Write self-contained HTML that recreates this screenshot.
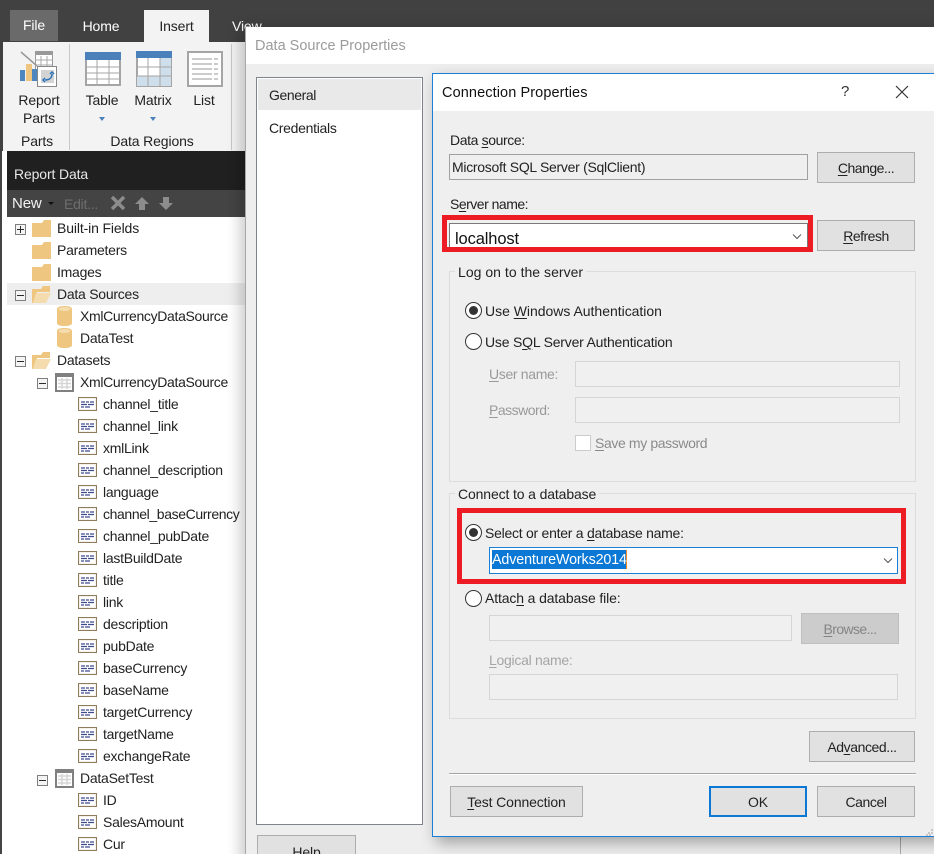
<!DOCTYPE html>
<html><head><meta charset="utf-8"><title>Connection Properties</title>
<style>
html,body{margin:0;padding:0;background:#fff}
#p{position:relative;width:934px;height:854px;overflow:hidden;background:#fff;font-family:"Liberation Sans",sans-serif;font-size:14px;color:#222}
#p div,#p svg,#p span.t{position:absolute;box-sizing:border-box}
.t{white-space:nowrap;line-height:20px;letter-spacing:-.13px}
#tr .t{letter-spacing:-.25px}
.c{text-align:center}
.g{color:#9a9a9a}
u{text-underline-offset:2px}
.btn{background:#e1e1e1;border:1px solid #adadad;line-height:1}
.in{border:1px solid #d5d5d5;background:#f0f0f0}
.box{border:1px solid #dcdcdc}
.lg{background:#efefef;padding:0 3px;margin-left:0;color:#222}
.r{width:17px;height:17px;border:1px solid #333;border-radius:50%;background:#fff}
.r.on::after{content:"";position:absolute;left:3px;top:3px;width:9px;height:9px;border-radius:50%;background:#333}
.red{border:5px solid #ed1c24}
.exp{width:11px;height:11px;border:1px solid #7f7f7f;background:#f4f4f4}
.exp::after{content:"";position:absolute;left:1px;top:4px;width:7px;height:1px;background:#2b2b2b}
.exp.pl::before{content:"";position:absolute;left:4px;top:1px;width:1px;height:7px;background:#2b2b2b}
</style></head><body>
<div id="p">
<svg width="0" height="0" style="left:0;top:0">
<defs>
<symbol id="fc" viewBox="0 0 19 17"><path d="M0 3h10l2-3h7v17H0z" fill="#eec680"/></symbol>
<symbol id="fo" viewBox="0 0 19 17"><path d="M0 3h9l2-3h7v6H5L1 17H0z" fill="#eec680"/><path d="M4 7h15L14 17H1z" fill="#f5dcae"/></symbol>
<symbol id="db" viewBox="0 0 15 20"><path d="M0 3C0 1 3 0 7.500 0S15 1 15 3v14c0 2-3 3-7.500 3S0 19 0 17z" fill="#eec680"/><ellipse cx="7.500" cy="3" rx="6" ry="2" fill="#f5dcae"/></symbol>
<symbol id="tb" viewBox="0 0 19 19"><rect x="1" y="1" width="17" height="17" fill="#fff" stroke="#808080" stroke-width="2"/><rect x="0" y="0" width="19" height="4" fill="#808080"/><path d="M3 7h13M3 10.500h13M3 14h13M7 5v11M12 5v11" stroke="#d5d5d5" fill="none" stroke-width="1.500"/></symbol>
<symbol id="fl" viewBox="0 0 19 14"><rect x=".5" y=".5" width="18" height="13" fill="#f4f1ea" stroke="#8d7d5c"/><rect x="2" y="2" width="15" height="10" fill="#fff"/><path d="M3 5h4M8 5h3M12 5h4M3 7.500h6M10 7.500h6M3 10h3M7 10h5" stroke="#3f4a8f" stroke-width="1.300" fill="none"/></symbol>
<symbol id="ch" viewBox="0 0 10 6"><path d="M1 .500l4 4 4-4" fill="none" stroke="#555" stroke-width="1"/></symbol>
</defs></svg>

<!-- app top bar -->
<div style="left:0;top:0;width:934px;height:42px;background:#414141"></div>
<div style="left:0;top:0;width:3px;height:151px;background:#414141"></div>
<div style="left:0;top:151px;width:2px;height:703px;background:#444"></div>
<div style="left:10px;top:10px;width:48px;height:31px;background:#6a6a6a"></div>
<span class="t c" style="left:10px;top:15px;width:48px;color:#fff">File</span>
<span class="t c" style="left:70px;top:16px;width:62px;color:#fff">Home</span>
<div style="left:144px;top:10px;width:65px;height:32px;background:#f3f3f3"></div>
<span class="t c" style="left:144px;top:16px;width:65px">Insert</span>
<span class="t" style="left:232px;top:16px;color:#fff">View</span>

<!-- ribbon -->
<div style="left:3px;top:42px;width:242px;height:109px;background:#f3f3f3"></div>
<div style="left:69px;top:44px;width:1px;height:106px;background:#c8c8c8"></div>
<div style="left:231px;top:44px;width:1px;height:106px;background:#c8c8c8"></div>
<svg style="left:20px;top:50px" width="38" height="38" viewBox="0 0 38 38">
<rect x="15.500" y="1.500" width="17" height="19" fill="#fff" stroke="#999"/><rect x="15" y="1" width="18" height="4" fill="#999"/><path d="M15 10h17M15 15h17M21 6v14M27 6v14" stroke="#aaa" fill="none"/>
<path d="M1 2l16 14" stroke="#999" stroke-width="1.500"/>
<rect x="0" y="20" width="5" height="11" fill="#4e86bf"/><rect x="6" y="14" width="6" height="17" fill="#eec680"/><rect x="12" y="19" width="5" height="12" fill="#4e86bf"/>
<rect x="17.500" y="16.500" width="19" height="20" fill="#fff" stroke="#888"/><rect x="21" y="20" width="13" height="13" fill="#d3d3d3"/><path d="M25 30c4 0 7-2 7-6M30 24l2-2 2 2M25 28l-2 2 2 2" fill="none" stroke="#2a73b8" stroke-width="1.500"/>
</svg>
<span class="t c" style="left:9px;top:90px;width:60px">Report</span>
<span class="t c" style="left:9px;top:108px;width:60px">Parts</span>
<span class="t c" style="left:7px;top:131px;width:60px">Parts</span>
<svg style="left:85px;top:52px" width="36" height="34" viewBox="0 0 36 34"><rect x="1" y="1" width="34" height="32" fill="#fff" stroke="#a5a5a5" stroke-width="2"/><rect width="36" height="8" fill="#4a81bb"/><path d="M1 15h34M1 21h34M1 27h34M12 8v25M24 8v25" stroke="#a5a5a5" fill="none"/></svg>
<svg style="left:136px;top:51px" width="36" height="36" viewBox="0 0 36 36"><rect x="1" y="1" width="34" height="34" fill="#fff" stroke="#a5a5a5" stroke-width="2"/><rect x="24" y="7" width="11" height="28" fill="#cfdeeb"/><rect x="1" y="25" width="34" height="10" fill="#cfdeeb"/><rect width="36" height="7" fill="#4a81bb"/><path d="M1 16h34M1 25h34M12 7v28M24 7v28" stroke="#a5a5a5" fill="none"/></svg>
<svg style="left:187px;top:51px" width="36" height="36" viewBox="0 0 36 36"><rect x="1" y="1" width="34" height="34" fill="#fff" stroke="#a5a5a5" stroke-width="2"/><path d="M5 8h20M5 13h20M5 18h20M5 23h20M5 28h20M27 8h4M27 13h4M27 18h4M27 23h4M27 28h4" stroke="#9a9a9a" fill="none"/></svg>
<span class="t c" style="left:72px;top:90px;width:60px">Table</span>
<span class="t c" style="left:123px;top:90px;width:60px">Matrix</span>
<span class="t c" style="left:174px;top:90px;width:60px">List</span>
<svg style="left:99px;top:117px" width="6" height="4"><path d="M0 0h6L3 4z" fill="#4a81bb"/></svg>
<svg style="left:150px;top:117px" width="6" height="4"><path d="M0 0h6L3 4z" fill="#4a81bb"/></svg>
<span class="t c" style="left:92px;top:131px;width:120px">Data Regions</span>

<!-- report data panel -->
<div style="left:7px;top:151px;width:238px;height:39px;background:#202020"></div>
<span class="t" style="left:14px;top:164px;color:#e8e8e8">Report Data</span>
<div style="left:7px;top:190px;width:238px;height:27px;background:#444"></div>
<span class="t" style="left:12px;top:194px;color:#f2f2f2;font-size:15px">New</span>
<svg style="left:48px;top:202px" width="6" height="3"><path d="M0 0h6L3 3z" fill="#111"/></svg>
<span class="t" style="left:64px;top:194px;color:#6d6d6d;letter-spacing:-.25px">Edit...</span>
<svg style="left:110px;top:195px" width="16" height="16"><path d="M2 2l12 12M14 2L2 14" stroke="#8c8c8c" stroke-width="3.500"/></svg>
<svg style="left:135px;top:197px" width="14" height="13"><path d="M7 0l7 7h-4v6H4V7H0z" fill="#8c8c8c"/></svg>
<svg style="left:159px;top:197px" width="14" height="13"><path d="M7 13l7-7h-4V0H4v6H0z" fill="#8c8c8c"/></svg>

<div style="left:7px;top:283px;width:238px;height:22px;background:#eee"></div>

<div id="tr" style="left:0;top:0">
<div class="exp pl" style="left:15px;top:224px"></div>
<svg style="left:32px;top:220px" width="19" height="17"><use href="#fc"/></svg><span class="t" style="left:57px;top:218px;letter-spacing:-.13px">Built-in Fields</span>
<svg style="left:32px;top:242px" width="19" height="17"><use href="#fc"/></svg><span class="t" style="left:57px;top:240px">Parameters</span>
<svg style="left:32px;top:264px" width="19" height="17"><use href="#fc"/></svg><span class="t" style="left:57px;top:262px">Images</span>
<div class="exp" style="left:15px;top:290px"></div>
<svg style="left:32px;top:286px" width="19" height="17"><use href="#fo"/></svg><span class="t" style="left:57px;top:284px">Data Sources</span>
<svg style="left:57px;top:306px" width="15" height="20"><use href="#db"/></svg><span class="t" style="left:80px;top:306px;letter-spacing:-.33px">XmlCurrencyDataSource</span>
<svg style="left:57px;top:328px" width="15" height="20"><use href="#db"/></svg><span class="t" style="left:80px;top:328px">DataTest</span>
<div class="exp" style="left:15px;top:356px"></div>
<svg style="left:32px;top:352px" width="19" height="17"><use href="#fo"/></svg><span class="t" style="left:57px;top:350px">Datasets</span>
<div class="exp" style="left:37px;top:378px"></div>
<svg style="left:55px;top:373px" width="19" height="19"><use href="#tb"/></svg><span class="t" style="left:80px;top:372px;letter-spacing:-.33px">XmlCurrencyDataSource</span>

<svg style="left:78px;top:397px" width="19" height="14"><use href="#fl"/></svg><span class="t" style="left:103px;top:394px">channel_title</span>
<svg style="left:78px;top:419px" width="19" height="14"><use href="#fl"/></svg><span class="t" style="left:103px;top:416px">channel_link</span>
<svg style="left:78px;top:441px" width="19" height="14"><use href="#fl"/></svg><span class="t" style="left:103px;top:438px">xmlLink</span>
<svg style="left:78px;top:463px" width="19" height="14"><use href="#fl"/></svg><span class="t" style="left:103px;top:460px">channel_description</span>
<svg style="left:78px;top:485px" width="19" height="14"><use href="#fl"/></svg><span class="t" style="left:103px;top:482px">language</span>
<svg style="left:78px;top:507px" width="19" height="14"><use href="#fl"/></svg><span class="t" style="left:103px;top:504px;letter-spacing:-.38px">channel_baseCurrency</span>
<svg style="left:78px;top:529px" width="19" height="14"><use href="#fl"/></svg><span class="t" style="left:103px;top:526px">channel_pubDate</span>
<svg style="left:78px;top:551px" width="19" height="14"><use href="#fl"/></svg><span class="t" style="left:103px;top:548px">lastBuildDate</span>
<svg style="left:78px;top:573px" width="19" height="14"><use href="#fl"/></svg><span class="t" style="left:103px;top:570px">title</span>
<svg style="left:78px;top:595px" width="19" height="14"><use href="#fl"/></svg><span class="t" style="left:103px;top:592px">link</span>
<svg style="left:78px;top:617px" width="19" height="14"><use href="#fl"/></svg><span class="t" style="left:103px;top:614px">description</span>
<svg style="left:78px;top:639px" width="19" height="14"><use href="#fl"/></svg><span class="t" style="left:103px;top:636px">pubDate</span>
<svg style="left:78px;top:661px" width="19" height="14"><use href="#fl"/></svg><span class="t" style="left:103px;top:658px">baseCurrency</span>
<svg style="left:78px;top:683px" width="19" height="14"><use href="#fl"/></svg><span class="t" style="left:103px;top:680px">baseName</span>
<svg style="left:78px;top:705px" width="19" height="14"><use href="#fl"/></svg><span class="t" style="left:103px;top:702px">targetCurrency</span>
<svg style="left:78px;top:727px" width="19" height="14"><use href="#fl"/></svg><span class="t" style="left:103px;top:724px">targetName</span>
<svg style="left:78px;top:749px" width="19" height="14"><use href="#fl"/></svg><span class="t" style="left:103px;top:746px">exchangeRate</span>
<div class="exp" style="left:37px;top:775px"></div>
<svg style="left:55px;top:769px" width="19" height="19"><use href="#tb"/></svg><span class="t" style="left:80px;top:768px">DataSetTest</span>
<svg style="left:78px;top:793px" width="19" height="14"><use href="#fl"/></svg><span class="t" style="left:103px;top:790px">ID</span>
<svg style="left:78px;top:815px" width="19" height="14"><use href="#fl"/></svg><span class="t" style="left:103px;top:812px">SalesAmount</span>
<svg style="left:78px;top:837px" width="19" height="14"><use href="#fl"/></svg><span class="t" style="left:103px;top:834px">Cur</span>
</div>

<!-- parent dialog -->
<div style="left:245px;top:27px;width:700px;height:840px;background:#eee;border-left:1px solid #a8a8a8;box-shadow:-6px 0 12px rgba(0,0,0,.18)"></div>
<div style="left:246px;top:27px;width:688px;height:37px;background:#fff"></div>
<span class="t" style="left:255px;top:36px;color:#9b9b9b;font-size:14.500px;letter-spacing:0">Data Source Properties</span>
<div style="left:256px;top:77px;width:167px;height:748px;background:#fff;border:1px solid #7f838a"></div>
<div style="left:258px;top:79px;width:163px;height:31px;background:#e9e9e9"></div>
<span class="t" style="left:269px;top:85px;letter-spacing:-.4px">General</span>
<span class="t" style="left:269px;top:118px;letter-spacing:-.3px">Credentials</span>
<div class="btn" style="left:257px;top:835px;width:99px;height:30px"></div>
<span class="t c" style="left:257px;top:842px;width:99px">Help</span>
<div style="left:900px;top:837px;width:1px;height:17px;background:#a8a8a8"></div>

<!-- connection dialog -->
<div style="left:432px;top:73px;width:510px;height:764px;background:#efefef;border:1px solid #1a7fd6;box-shadow:4px 6px 14px rgba(0,0,0,.32)"></div>
<div style="left:433px;top:74px;width:501px;height:37px;background:#fff"></div>
<span class="t" style="left:442px;top:83px;color:#111;font-size:14.500px;letter-spacing:.1px">Connection Properties</span>
<span class="t" style="left:841px;top:82px;color:#333;font-size:15px">?</span>
<svg style="left:895px;top:85px" width="14" height="14"><path d="M1 1l12 12M13 1L1 13" stroke="#333" stroke-width="1.200" fill="none"/></svg>
<svg style="left:926px;top:829px" width="7" height="7"><path d="M5 0h2v2H5zM2 3h2v2H2zM5 3h2v2H5zM0 5h2v2H0zM3 5h2v2H3z" fill="#c8c8c8"/></svg>

<span class="t" style="left:450px;top:130px;letter-spacing:-.38px">Data <u>s</u>ource:</span>
<div style="left:449px;top:154px;width:359px;height:26px;border:1px solid #a0a0a0;background:#efefef"></div>
<span class="t" style="left:452px;top:157px;letter-spacing:-.29px">Microsoft SQL Server (SqlClient)</span>
<div class="btn" style="left:817px;top:152px;width:98px;height:31px"></div>
<span class="t c" style="left:817px;top:158px;width:98px;letter-spacing:-.5px"><u>C</u>hange...</span>

<span class="t" style="left:450px;top:194px;letter-spacing:-.5px">S<u>e</u>rver name:</span>
<div style="left:449px;top:223px;width:359px;height:26px;border:1px solid #7a7a7a;background:#fff"></div>
<span class="t" style="left:455px;top:229px;font-size:16.500px;color:#111">localhost</span>
<div class="red" style="left:442px;top:215px;width:371px;height:37px"></div>
<svg style="left:792px;top:234px" width="10" height="6"><use href="#ch"/></svg>
<div class="btn" style="left:817px;top:220px;width:98px;height:31px"></div>
<span class="t c" style="left:817px;top:226px;width:98px;letter-spacing:-.5px"><u>R</u>efresh</span>

<div class="box" style="left:449px;top:271px;width:467px;height:211px"></div>
<span class="t lg" style="left:455px;top:262px;letter-spacing:.03px">Log on to the server</span>
<div class="r on" style="left:465px;top:302px"></div>
<span class="t" style="left:485px;top:301px;letter-spacing:-.02px">Use <u>W</u>indows Authentication</span>
<div class="r" style="left:465px;top:333px"></div>
<span class="t" style="left:485px;top:332px;letter-spacing:-.2px">Use S<u>Q</u>L Server Authentication</span>
<span class="t g" style="left:489px;top:364px;letter-spacing:-.33px"><u>U</u>ser name:</span>
<div class="in" style="left:575px;top:361px;width:325px;height:26px"></div>
<span class="t g" style="left:489px;top:400px;letter-spacing:-.5px"><u>P</u>assword:</span>
<div class="in" style="left:575px;top:397px;width:325px;height:26px"></div>
<div style="left:575px;top:435px;width:16px;height:16px;background:#fff;border:1px solid #ccc"></div>
<span class="t g" style="left:595px;top:433px;color:#8a8a8a;letter-spacing:-.38px"><u>S</u>ave my password</span>

<div class="box" style="left:449px;top:493px;width:467px;height:226px"></div>
<span class="t lg" style="left:455px;top:484px">Connect to a database</span>
<div class="red" style="left:457px;top:508px;width:449px;height:76px"></div>
<div class="r on" style="left:465px;top:524px"></div>
<span class="t" style="left:485px;top:523px;letter-spacing:-.26px">Select or enter a <u>d</u>atabase name:</span>
<div style="left:489px;top:547px;width:409px;height:27px;border:1px solid #1a7fd6;background:#fff"></div>
<div style="left:492px;top:550px;width:134px;height:19px;background:#0a78d4"></div>
<div style="left:626px;top:550px;width:1px;height:19px;background:#f08a24"></div>
<span class="t" style="left:492px;top:550px;color:#fff;font-size:14.300px">AdventureWorks2014</span>
<svg style="left:883px;top:558px" width="10" height="6"><use href="#ch"/></svg>

<div class="r" style="left:465px;top:590px"></div>
<span class="t" style="left:485px;top:588px">Attac<u>h</u> a database file:</span>
<div class="in" style="left:489px;top:615px;width:303px;height:26px"></div>
<div style="left:801px;top:613px;width:98px;height:31px;background:#ccc;border:1px solid #bfbfbf"></div>
<span class="t c g" style="left:801px;top:619px;width:98px;color:#858585;letter-spacing:-.6px"><u>B</u>rowse...</span>
<span class="t g" style="left:489px;top:650px;color:#a5a5a5;letter-spacing:-.28px"><u>L</u>ogical name:</span>
<div class="in" style="left:489px;top:674px;width:409px;height:26px"></div>

<div class="btn" style="left:809px;top:731px;width:106px;height:31px"></div>
<span class="t c" style="left:809px;top:737px;width:106px;letter-spacing:-.43px">Ad<u>v</u>anced...</span>
<div style="left:449px;top:773px;width:467px;height:1px;background:#a5a5a5"></div>
<div style="left:449px;top:774px;width:467px;height:1px;background:#fff"></div>
<div class="btn" style="left:450px;top:786px;width:133px;height:31px"></div>
<span class="t c" style="left:450px;top:792px;width:133px"><u>T</u>est Connection</span>
<div class="btn" style="left:709px;top:786px;width:98px;height:31px;border:2px solid #0a78d4"></div>
<span class="t c" style="left:709px;top:792px;width:98px">OK</span>
<div class="btn" style="left:817px;top:786px;width:98px;height:31px"></div>
<span class="t c" style="left:817px;top:792px;width:98px;letter-spacing:-.43px">Cancel</span>
</div>
</body></html>
